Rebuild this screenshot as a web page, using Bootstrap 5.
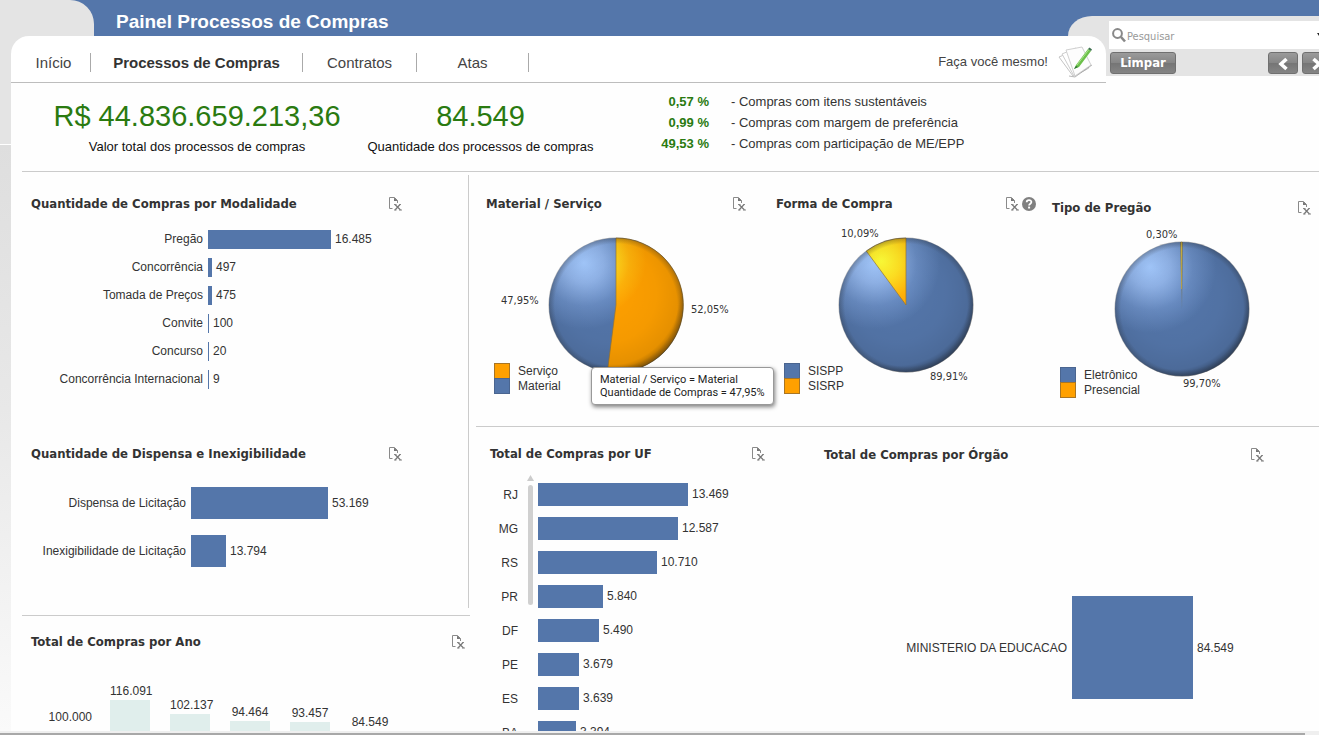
<!DOCTYPE html>
<html lang="pt-BR">
<head>
<meta charset="utf-8">
<meta name="viewport" content="width=device-width, initial-scale=1">
<title>Painel Processos de Compras</title>
<link href="https://cdn.jsdelivr.net/npm/bootstrap@5.3.0/dist/css/bootstrap.min.css" rel="stylesheet">
<style>
  :root { --azul: #5476aa; --cinza: #e4e4e4; --linha: #cbcbcb; --ui: "DejaVu Sans Condensed", "DejaVu Sans", sans-serif; }
  body { font-family: "Liberation Sans", Arial, sans-serif; font-size: 12px; line-height: 16px; color: #333; background: #fefefe; }
  ul { list-style: none; margin: 0; padding: 0; }

  /* header */
  .top-strip { background: var(--azul); height: 36px; }
  .tab-left { width: 94px; background: var(--cinza); border-top-right-radius: 24px; }
  .page-title { font-size: 19px; line-height: 24px; font-weight: 700; color: #fff; padding: 10px 0 0 22px; }
  .tab-right { width: 251px; height: 20px; background: var(--cinza); border-top-left-radius: 24px 20px; }
  .nav-back { background: var(--cinza); padding-left: 11px; }
  .nav-panel { background: #fff; height: 47px; padding-top: 6px; border-bottom: 1px solid #bdbdbd; border-radius: 18px 18px 0 0; }
  .menu-list { margin-left: 6px; }
  .menu-list li { border-right: 1px solid #aaa; height: 19px; width: 114px; text-align: center; }
  .menu-list li.w-start { width: 74px; }
  .menu-list li.w-wide { width: 212px; }
  .menu-list li.w-end { width: 112px; }
  .menu-list a, .self-link { color: #444; text-decoration: none; font-size: 15px; line-height: 20px; }
  .menu-list a.current { font-weight: 700; color: #333; }
  .self-link { font-size: 13px; padding-right: 12px; gap: 10px; }

  .toolbox { width: 213px; height: 60px; margin-top: -20px; padding: 5px 0 0 3px; background: var(--cinza); overflow: hidden; z-index: 1; }
  .search-line { background: #fff; height: 28px; padding-left: 3px; }
  .search-line input { border: 0; outline: 0; padding: 3px 0 0 1px; background: transparent; font-family: var(--ui); font-size: 11px; line-height: 16px; min-width: 0; }
  .search-line input::placeholder { color: #999; opacity: 1; }
  .tool-row { padding: 3px 0 0 1px; }
  .arrows { margin-right: -13px; }
  .tool-btn { border: 1px solid #707070; border-radius: 3px; height: 22px; padding: 0; color: #fff; background: linear-gradient(#9b9b9b, #858585 50%, #757575 51%, #848484); font-family: var(--ui); font-weight: 700; font-size: 13px; line-height: 18px; }
  .tool-btn.wide { width: 66px; }
  .tool-btn.arrow { width: 30px; flex: none; }

  /* body */
  .main-area { min-height: 0; }
  .rail { width: 11px; flex: none; }
  .rail-top { height: 62px; background: var(--cinza); border-bottom: 1px solid #fff; }
  .rail-rest { background: linear-gradient(#dedede, #e8e8e8 45%, #fafafa); }
  .content-pane { padding-left: 11px; min-width: 0; }
  .kpis { height: 89px; padding: 16px 0 0 30px; border-bottom: 1px solid var(--linha); }
  .kpi-box { color: #111; font-size: 13px; text-align: center; min-width: 227px; margin-right: 25px; white-space: nowrap; }
  .kpi-box.total { min-width: 290px; }
  .kpi-box strong { display: block; font-weight: 400; font-size: 29px; line-height: 34px; color: #2a7a10; margin-bottom: 6px; }
  .share-list { margin: -8px 0 0 31px; font-size: 13px; line-height: 21px; white-space: nowrap; }
  .share-list b { display: inline-block; width: 59px; margin-right: 22px; text-align: right; color: #2a7a10; }

  .board { display: grid; grid-template-columns: minmax(0, 448fr) minmax(0, 849fr); }
  .left-top { margin: 3px 0 7px; padding: 19px 0 33px 9px; border-right: 1px solid var(--linha); width: calc(100% - 1px); }
  .year-pane { border-top: 1px solid var(--linha); padding: 16px 5px 0 9px; }
  .head-line { height: 20px; gap: 3px; }
  .head-line h2 { font-family: var(--ui); font-weight: 700; font-size: 13px; line-height: 20px; color: #333; margin: 0; white-space: nowrap; }
  .inset-end { padding-right: 66px; }
  .icon-btn { border: 0; background: none; padding: 0; line-height: 0; }

  .bars li { display: flex; align-items: center; gap: 4px; white-space: nowrap; }
  .bars .fill { background: var(--azul); flex: none; }
  .bars .cap { flex: none; text-align: right; padding-right: 1px; }
  .by-mode { margin-top: 11px; margin-bottom: 51px; }
  .by-mode li { height: 28px; }
  .by-mode .cap { width: 173px; }
  .by-mode .fill { height: 19px; }
  .by-waiver { margin-top: 15px; }
  .by-waiver li { height: 48px; }
  .by-waiver .cap { width: 156px; }
  .by-waiver .fill { height: 32px; }

  .year-plot { height: 132px; margin-top: 32px; align-items: flex-end; }
  .year-axis { width: 69px; padding: 0 8px 91px 0; text-align: right; }
  .year-col { width: 60px; padding-left: 10px; }
  .year-col span { display: block; width: 40px; text-align: center; line-height: 18px; white-space: nowrap; }
  .year-col i { display: block; width: 40px; background: #e0eeec; }

  .right-side { padding-left: 6px; }
  .pies { display: grid; grid-template-columns: minmax(0, 290fr) minmax(0, 276fr) minmax(0, 277fr); height: 255px; border-bottom: 1px solid var(--linha); }
  .pie-cell { padding: 22px 20px 0 10px; }
  .pie-cell.second { padding-right: 6px; }
  .pie-cell.third { padding: 26px 8px 0 10px; }
  .pie-cell svg.pie { display: block; margin-top: 6px; overflow: visible; font-size: 12px; fill: #333; }
  .pie .pct { font-family: var(--ui); font-size: 11px; }
  .tip { left: 115px; top: 195px; font-family: Roboto, sans-serif; font-size: 11px; line-height: 13px; color: #222; background: #fff; border: 1px solid #999; border-radius: 4px; padding: 5px 8px; white-space: nowrap; box-shadow: 1px 2px 4px rgba(0,0,0,.5); z-index: 2; }

  .bottom-row { display: grid; grid-template-columns: minmax(0, 334fr) minmax(0, 509fr); }
  .uf-pane { padding: 17px 45px 0 14px; }
  .org-pane { padding: 18px 55px 0 14px; }
  .by-uf { margin-top: 13px; }
  .uf-names { width: 28px; text-align: right; }
  .uf-names li { height: 34px; line-height: 36px; }
  .uf-scroll { width: 20px; padding: 0 5px 0 10px; }
  .uf-scroll i { display: block; width: 5px; height: 120px; margin-top: 4px; background: #d0d0d0; border-radius: 3px; }
  .uf-scroll svg { display: block; margin-left: -1px; margin-top: -2px; }
  .by-uf .bars li { height: 34px; }
  .by-uf .fill { height: 23px; }
  .by-org { margin-top: 131px; }
  .by-org .cap { width: 244px; }
  .by-org .fill { height: 103px; }
  .bottom-edge { height: 4px; flex: none; background: #efefef; padding-top: 2px; }
  .bottom-edge div { height: 2px; margin-right: 14px; background: #a8a8a8; }
</style>
</head>
<body class="vh-100 overflow-hidden d-flex flex-column">

<svg width="0" height="0" class="position-absolute" aria-hidden="true">
  <defs>
    <symbol id="export" viewBox="0 0 14 14">
      <path d="M4.500 11.500H1.500V.5H6.500L9.500 3.500V6" fill="none" stroke="#8a8a8a"/>
      <path d="M6 0.500V4H9.800z" fill="#777"/>
      <path d="M7 7.500L12.500 13M12 7.500L7 13" stroke="#777" stroke-width="1.200"/><path d="M6 7.500h2.500M11 7.500h2M6 13h2.500M11 13h3" stroke="#888"/>
    </symbol>
    <radialGradient id="blue" gradientUnits="userSpaceOnUse" cx="98" cy="43" r="66">
      <stop offset="0" stop-color="#a4caff"/><stop offset=".3" stop-color="#90b3e8"/><stop offset=".65" stop-color="#688bc1"/><stop offset="1" stop-color="#5476aa"/>
    </radialGradient>
    <radialGradient id="orange" gradientUnits="userSpaceOnUse" cx="105" cy="41" r="55">
      <stop offset="0" stop-color="#ffff38"/><stop offset=".35" stop-color="#ffe022"/><stop offset=".7" stop-color="#ffb30a"/><stop offset="1" stop-color="#ffa000"/>
    </radialGradient>
    <radialGradient id="rim" gradientUnits="userSpaceOnUse" cx="122" cy="74" r="81">
      <stop offset="0" stop-color="#000" stop-opacity="0"/><stop offset=".6" stop-color="#000" stop-opacity=".04"/><stop offset=".88" stop-color="#000" stop-opacity=".1"/><stop offset="1" stop-color="#000" stop-opacity=".38"/>
    </radialGradient>
    <radialGradient id="edge" gradientUnits="userSpaceOnUse" cx="130" cy="85" r="68">
      <stop offset=".9" stop-color="#222" stop-opacity="0"/><stop offset="1" stop-color="#222" stop-opacity=".32"/>
    </radialGradient>
  </defs>
</svg>

<header>
  <div class="top-strip d-flex">
    <div class="tab-left"></div>
    <h1 class="page-title m-0">Painel Processos de Compras</h1>
    <div class="tab-right ms-auto align-self-end"></div>
  </div>
  <div class="d-flex">
    <div class="nav-back flex-grow-1">
      <nav class="nav-panel d-flex align-items-center">
        <ul class="menu-list d-flex">
          <li class="w-start"><a href="#">Início</a></li>
          <li class="w-wide"><a href="#" class="current" aria-current="page">Processos de Compras</a></li>
          <li><a href="#">Contratos</a></li>
          <li class="w-end"><a href="#">Atas</a></li>
        </ul>
        <a href="#" class="self-link d-flex align-items-center ms-auto">Faça você mesmo!
          <svg width="36" height="34" viewBox="0 0 36 34" aria-hidden="true">
            <path d="M1 12L15 6L29 24L15 31z" fill="#fff" stroke="#c4c4c4"/>
            <path d="M4 9L18 3L31 23L16 31z" fill="#fff" stroke="#ccc"/>
            <path d="M8 5L24 2L33 20L17 31z" fill="#fdfdfd" stroke="#d0d0d0"/>
            <path d="M11 31L17 32L34 20" fill="none" stroke="#999" opacity=".7"/>
            <path d="M18 20L30 4L33 6L21 22L16 24z" fill="#6cc04a"/>
            <path d="M19 20L30.500 5" stroke="#a8e48b"/><path d="M30 4L31.500 2.500L34 4.500L33 6z" fill="#3e7050"/><path d="M18 21L16 24L20 22z" fill="#286a36"/>
          </svg></a>
      </nav>
    </div>
    <div class="toolbox position-relative">
      <div class="search-line d-flex align-items-center">
        <svg width="14" height="15" viewBox="0 0 14 15" aria-hidden="true"><circle cx="5.500" cy="5.500" r="4.400" fill="none" stroke="#888" stroke-width="2"/><path d="M9 9L13 13.500" stroke="#888" stroke-width="2.600"/></svg>
        <input type="search" class="flex-grow-1" placeholder="Pesquisar" aria-label="Pesquisar">
        <svg class="flex-shrink-0" width="2" height="4" viewBox="0 0 2 4" aria-hidden="true"><path d="M0 0H2V3z" fill="#222"/></svg>
      </div>
      <div class="tool-row d-flex">
        <button type="button" class="tool-btn wide">Limpar</button>
        <div class="arrows d-flex gap-1 ms-auto">
          <button type="button" class="tool-btn arrow" aria-label="Voltar"><svg width="12" height="14" viewBox="0 0 12 14"><path d="M9.500 2L4 7l5.500 5" fill="none" stroke="#fff" stroke-width="3.600"/></svg></button>
          <button type="button" class="tool-btn arrow" aria-label="Avançar"><svg width="12" height="14" viewBox="0 0 12 14"><path d="M2.500 2L8 7l-5.500 5" fill="none" stroke="#fff" stroke-width="3.600"/></svg></button>
        </div>
      </div>
    </div>
  </div>
</header>

<main class="main-area d-flex flex-grow-1 overflow-hidden">
  <div class="rail d-flex flex-column">
    <div class="rail-top"></div>
    <div class="rail-rest flex-grow-1"></div>
  </div>
  <div class="content-pane flex-grow-1">
    <section class="kpis d-flex">
      <div class="kpi-box total"><strong>R$ 44.836.659.213,36</strong>Valor total dos processos de compras</div>
      <div class="kpi-box"><strong>84.549</strong>Quantidade dos processos de compras</div>
      <ul class="share-list">
        <li><b>0,57 %</b>- Compras com itens sustentáveis</li>
        <li><b>0,99 %</b>- Compras com margem de preferência</li>
        <li><b>49,53 %</b>- Compras com participação de ME/EPP</li>
      </ul>
    </section>

    <div class="board">
      <div class="left-side">
        <div class="left-top">
          <div class="head-line inset-end d-flex align-items-center"><h2 class="me-auto">Quantidade de Compras por Modalidade</h2><button class="icon-btn" aria-label="Exportar"><svg width="14" height="14"><use href="#export"/></svg></button></div>
          <ul class="bars by-mode">
            <li><span class="cap">Pregão</span><i class="fill" style="width:123px"></i>16.485</li>
            <li><span class="cap">Concorrência</span><i class="fill" style="width:4px"></i>497</li>
            <li><span class="cap">Tomada de Preços</span><i class="fill" style="width:4px"></i>475</li>
            <li><span class="cap">Convite</span><i class="fill" style="width:1px"></i>100</li>
            <li><span class="cap">Concurso</span><i class="fill" style="width:1px"></i>20</li>
            <li><span class="cap">Concorrência Internacional</span><i class="fill" style="width:1px"></i>9</li>
          </ul>
          <div class="head-line inset-end d-flex align-items-center"><h2 class="me-auto">Quantidade de Dispensa e Inexigibilidade</h2><button class="icon-btn" aria-label="Exportar"><svg width="14" height="14"><use href="#export"/></svg></button></div>
          <ul class="bars by-waiver">
            <li><span class="cap">Dispensa de Licitação</span><i class="fill" style="width:137px"></i>53.169</li>
            <li><span class="cap">Inexigibilidade de Licitação</span><i class="fill" style="width:35px"></i>13.794</li>
          </ul>
        </div>
        <section class="year-pane">
          <div class="head-line d-flex align-items-center"><h2 class="me-auto">Total de Compras por Ano</h2><button class="icon-btn" aria-label="Exportar"><svg width="14" height="14"><use href="#export"/></svg></button></div>
          <div class="year-plot d-flex">
            <div class="year-axis">100.000</div>
            <div class="year-col"><span>116.091</span><i style="height:116px"></i></div>
            <div class="year-col"><span>102.137</span><i style="height:102px"></i></div>
            <div class="year-col"><span>94.464</span><i style="height:95px"></i></div>
            <div class="year-col"><span>93.457</span><i style="height:94px"></i></div>
            <div class="year-col"><span>84.549</span><i style="height:85px"></i></div>
          </div>
        </section>
      </div>

      <div class="right-side">
        <div class="pies">
          <section class="pie-cell position-relative">
            <div class="head-line d-flex align-items-center"><h2 class="me-auto">Material / Serviço</h2><button class="icon-btn" aria-label="Exportar"><svg width="14" height="14"><use href="#export"/></svg></button></div>
            <svg class="pie" width="250" height="180">
              <circle cx="130" cy="85" r="67" fill="url(#blue)"/>
              <path d="M130 85V18A67 67 0 1 1 121.400 151.400z" fill="url(#orange)" stroke="#967535" stroke-width=".7"/>
              <circle cx="130" cy="85" r="67.500" fill="url(#rim)"/><circle cx="130" cy="85" r="67.500" fill="url(#edge)"/>
              <text class="pct" x="15" y="84">47,95%</text><text class="pct" x="205" y="93">52,05%</text>
              <rect x="8.500" y="143.500" width="15" height="15" fill="#ffa000" stroke="#a87524"/><rect x="8.500" y="158.500" width="15" height="15" fill="#5476aa" stroke="#4a6590"/>
              <text x="32" y="155">Serviço</text><text x="32" y="170">Material</text>
            </svg>
            <div class="tip position-absolute" role="tooltip">Material / Serviço = Material<br>Quantidade de Compras = 47,95%</div>
          </section>
          <section class="pie-cell second">
            <div class="head-line d-flex align-items-center"><h2 class="me-auto">Forma de Compra</h2><button class="icon-btn" aria-label="Exportar"><svg width="14" height="14"><use href="#export"/></svg></button><button class="icon-btn" aria-label="Ajuda"><svg width="14" height="14" viewBox="0 0 14 14"><circle cx="7" cy="7" r="7" fill="#808080"/><path d="M4.700 5.300C4.700 2.500 9.400 2.500 9.400 5.100C9.400 6.700 7.100 6.700 7.100 8.500" fill="none" stroke="#fff" stroke-width="1.800"/><path d="M6.100 9.600h2v1.900h-2z" fill="#fff"/></svg></button></div>
            <svg class="pie" width="250" height="180">
              <circle cx="130" cy="85" r="67" fill="url(#blue)"/>
              <path d="M130 85L90.300 31A67 67 0 0 1 130 18z" fill="url(#orange)" stroke="#967535" stroke-width=".7"/>
              <circle cx="130" cy="85" r="67.500" fill="url(#rim)"/><circle cx="130" cy="85" r="67.500" fill="url(#edge)"/>
              <text class="pct" x="65" y="17">10,09%</text><text class="pct" x="154" y="160">89,91%</text>
              <rect x="8.500" y="143.500" width="15" height="15" fill="#5476aa" stroke="#4a6590"/><rect x="8.500" y="158.500" width="15" height="15" fill="#ffa000" stroke="#a87524"/>
              <text x="32" y="155">SISPP</text><text x="32" y="170">SISRP</text>
            </svg>
          </section>
          <section class="pie-cell third">
            <div class="head-line d-flex align-items-center"><h2 class="me-auto">Tipo de Pregão</h2><button class="icon-btn" aria-label="Exportar"><svg width="14" height="14"><use href="#export"/></svg></button></div>
            <svg class="pie" width="250" height="180">
              <circle cx="130" cy="85" r="67" fill="url(#blue)"/>
              <path d="M130 85L128 18H131z" fill="#6f7874"/><path d="M129.500 65L129 18H130z" fill="#e8c83a" stroke="#c9a83a" stroke-width=".5"/>
              <circle cx="130" cy="85" r="67.500" fill="url(#rim)"/><circle cx="130" cy="85" r="67.500" fill="url(#edge)"/>
              <text class="pct" x="94" y="14">0,30%</text><text class="pct" x="131" y="163">99,70%</text>
              <rect x="8.500" y="143.500" width="15" height="15" fill="#5476aa" stroke="#4a6590"/><rect x="8.500" y="158.500" width="15" height="15" fill="#ffa000" stroke="#a87524"/>
              <text x="32" y="155">Eletrônico</text><text x="32" y="170">Presencial</text>
            </svg>
          </section>
        </div>

        <div class="bottom-row">
          <section class="uf-pane">
            <div class="head-line d-flex align-items-center"><h2 class="me-auto">Total de Compras por UF</h2><button class="icon-btn" aria-label="Exportar"><svg width="14" height="14"><use href="#export"/></svg></button></div>
            <div class="by-uf d-flex">
              <ul class="uf-names"><li>RJ</li><li>MG</li><li>RS</li><li>PR</li><li>DF</li><li>PE</li><li>ES</li><li>BA</li></ul>
              <div class="uf-scroll"><svg width="7" height="6"><path d="M3.500 0L7 6H0z" fill="#ccc"/></svg><i></i></div>
              <ul class="bars">
                <li><i class="fill" style="width:150px"></i>13.469</li>
                <li><i class="fill" style="width:140px"></i>12.587</li>
                <li><i class="fill" style="width:119px"></i>10.710</li>
                <li><i class="fill" style="width:65px"></i>5.840</li>
                <li><i class="fill" style="width:61px"></i>5.490</li>
                <li><i class="fill" style="width:41px"></i>3.679</li>
                <li><i class="fill" style="width:41px"></i>3.639</li>
                <li><i class="fill" style="width:38px"></i>3.394</li>
              </ul>
            </div>
          </section>
          <section class="org-pane">
            <div class="head-line d-flex align-items-center"><h2 class="me-auto">Total de Compras por Órgão</h2><button class="icon-btn" aria-label="Exportar"><svg width="14" height="14"><use href="#export"/></svg></button></div>
            <ul class="bars by-org">
              <li><span class="cap">MINISTERIO DA EDUCACAO</span><i class="fill" style="width:121px"></i>84.549</li>
            </ul>
          </section>
        </div>
      </div>
    </div>
  </div>
</main>
<div class="bottom-edge"><div></div></div>
<script src="https://cdn.jsdelivr.net/npm/bootstrap@5.3.0/dist/js/bootstrap.bundle.min.js"></script>
</body>
</html>
